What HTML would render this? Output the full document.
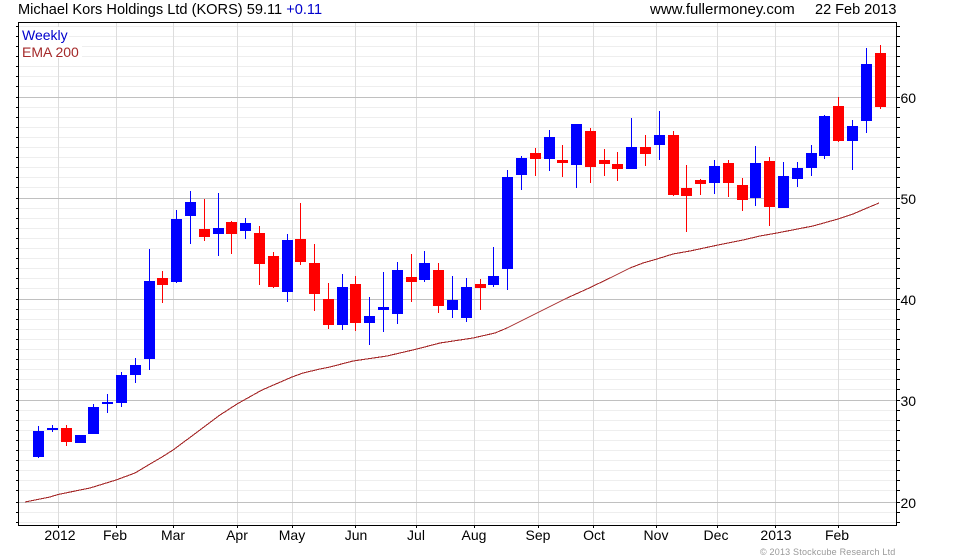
<!DOCTYPE html>
<html><head><meta charset="utf-8"><style>
html,body{margin:0;padding:0;background:#fff}
svg{display:block}
text{font-family:"Liberation Sans",Arial,sans-serif;font-size:14px;fill:#000}
.m{text-anchor:middle}
</style></head><body>
<svg width="980" height="560" viewBox="0 0 980 560" xmlns="http://www.w3.org/2000/svg">
<rect width="980" height="560" fill="#fff"/>
<g shape-rendering="crispEdges">
<path fill="#eeeeee" d="M19 26h878v1H19zM19 36h878v1H19zM19 46h878v1H19zM19 56h878v1H19zM19 66h878v1H19zM19 76h878v1H19zM19 86h878v1H19zM19 107h878v1H19zM19 117h878v1H19zM19 127h878v1H19zM19 137h878v1H19zM19 147h878v1H19zM19 157h878v1H19zM19 167h878v1H19zM19 177h878v1H19zM19 187h878v1H19zM19 208h878v1H19zM19 218h878v1H19zM19 228h878v1H19zM19 238h878v1H19zM19 248h878v1H19zM19 258h878v1H19zM19 268h878v1H19zM19 278h878v1H19zM19 288h878v1H19zM19 309h878v1H19zM19 319h878v1H19zM19 329h878v1H19zM19 339h878v1H19zM19 349h878v1H19zM19 359h878v1H19zM19 369h878v1H19zM19 379h878v1H19zM19 389h878v1H19zM19 410h878v1H19zM19 420h878v1H19zM19 430h878v1H19zM19 440h878v1H19zM19 450h878v1H19zM19 460h878v1H19zM19 470h878v1H19zM19 480h878v1H19zM19 490h878v1H19zM19 512h878v1H19zM19 522h878v1H19z"/>
<path fill="#dddddd" d="M58 23h1v502h-1zM116 23h1v502h-1zM173 23h1v502h-1zM237 23h1v502h-1zM292 23h1v502h-1zM355 23h1v502h-1zM416 23h1v502h-1zM474 23h1v502h-1zM538 23h1v502h-1zM593 23h1v502h-1zM656 23h1v502h-1zM717 23h1v502h-1zM775 23h1v502h-1zM838 23h1v502h-1z"/>
<path fill="#c0c0c0" d="M19 97h878v1H19zM19 198h878v1H19zM19 299h878v1H19zM19 400h878v1H19zM19 502h878v1H19z"/>
<rect x="19" y="27" width="50" height="16" fill="#fff"/>
<rect x="19" y="43" width="63" height="15" fill="#fff"/>
<path fill="#000" d="M18 22h879v1H18zM18 22h1v504h-1zM18 525h879v1H18zM896 22h1v504h-1z"/>
<path fill="#000" d="M16 26h2v1h-2zM16 36h2v1h-2zM16 46h2v1h-2zM16 56h2v1h-2zM16 66h2v1h-2zM16 76h2v1h-2zM16 86h2v1h-2zM16 97h2v1h-2zM16 107h2v1h-2zM16 117h2v1h-2zM16 127h2v1h-2zM16 137h2v1h-2zM16 147h2v1h-2zM16 157h2v1h-2zM16 167h2v1h-2zM16 177h2v1h-2zM16 187h2v1h-2zM16 198h2v1h-2zM16 208h2v1h-2zM16 218h2v1h-2zM16 228h2v1h-2zM16 238h2v1h-2zM16 248h2v1h-2zM16 258h2v1h-2zM16 268h2v1h-2zM16 278h2v1h-2zM16 288h2v1h-2zM16 299h2v1h-2zM16 309h2v1h-2zM16 319h2v1h-2zM16 329h2v1h-2zM16 339h2v1h-2zM16 349h2v1h-2zM16 359h2v1h-2zM16 369h2v1h-2zM16 379h2v1h-2zM16 389h2v1h-2zM16 400h2v1h-2zM16 410h2v1h-2zM16 420h2v1h-2zM16 430h2v1h-2zM16 440h2v1h-2zM16 450h2v1h-2zM16 460h2v1h-2zM16 470h2v1h-2zM16 480h2v1h-2zM16 490h2v1h-2zM16 502h2v1h-2zM16 512h2v1h-2zM16 522h2v1h-2z"/>
<path fill="#000" d="M897 26h3v1h-3zM897 36h3v1h-3zM897 46h3v1h-3zM897 56h3v1h-3zM897 66h3v1h-3zM897 76h3v1h-3zM897 86h3v1h-3zM897 97h3v1h-3zM897 107h3v1h-3zM897 117h3v1h-3zM897 127h3v1h-3zM897 137h3v1h-3zM897 147h3v1h-3zM897 157h3v1h-3zM897 167h3v1h-3zM897 177h3v1h-3zM897 187h3v1h-3zM897 198h3v1h-3zM897 208h3v1h-3zM897 218h3v1h-3zM897 228h3v1h-3zM897 238h3v1h-3zM897 248h3v1h-3zM897 258h3v1h-3zM897 268h3v1h-3zM897 278h3v1h-3zM897 288h3v1h-3zM897 299h3v1h-3zM897 309h3v1h-3zM897 319h3v1h-3zM897 329h3v1h-3zM897 339h3v1h-3zM897 349h3v1h-3zM897 359h3v1h-3zM897 369h3v1h-3zM897 379h3v1h-3zM897 389h3v1h-3zM897 400h3v1h-3zM897 410h3v1h-3zM897 420h3v1h-3zM897 430h3v1h-3zM897 440h3v1h-3zM897 450h3v1h-3zM897 460h3v1h-3zM897 470h3v1h-3zM897 480h3v1h-3zM897 490h3v1h-3zM897 502h3v1h-3zM897 512h3v1h-3zM897 522h3v1h-3z"/>
<path fill="#000" d="M58 526h1v2h-1zM116 526h1v2h-1zM173 526h1v2h-1zM237 526h1v2h-1zM292 526h1v2h-1zM355 526h1v2h-1zM416 526h1v2h-1zM474 526h1v2h-1zM538 526h1v2h-1zM593 526h1v2h-1zM656 526h1v2h-1zM717 526h1v2h-1zM775 526h1v2h-1zM838 526h1v2h-1z"/>
<path fill="#0000ff" d="M38 426h1v32h-1zM33 431h11v26H33zM52 425h1v7h-1zM47 428h11v2H47zM75 435h11v8H75zM93 404h1v30h-1zM88 407h11v27H88zM107 394h1v19h-1zM102 402h11v2h-11zM121 372h1v35h-1zM116 375h11v28h-11zM135 358h1v25h-1zM130 365h11v10h-11zM149 249h1v121h-1zM144 281h11v78h-11zM176 210h1v73h-1zM171 219h11v63h-11zM190 191h1v53h-1zM185 202h11v14h-11zM218 193h1v63h-1zM213 228h11v6h-11zM245 218h1v21h-1zM240 223h11v8h-11zM287 234h1v68h-1zM282 240h11v52h-11zM342 274h1v56h-1zM337 287h11v38h-11zM369 297h1v48h-1zM364 316h11v7h-11zM383 272h1v60h-1zM378 307h11v3h-11zM397 262h1v62h-1zM392 270h11v44h-11zM424 251h1v31h-1zM419 263h11v17h-11zM452 276h1v42h-1zM447 300h11v10h-11zM466 278h1v44h-1zM461 287h11v31h-11zM493 247h1v40h-1zM488 276h11v9h-11zM507 170h1v120h-1zM502 177h11v92h-11zM521 156h1v34h-1zM516 158h11v17h-11zM549 130h1v41h-1zM544 137h11v22h-11zM576 124h1v64h-1zM571 124h11v41h-11zM631 118h1v51h-1zM626 147h11v22h-11zM659 111h1v49h-1zM654 135h11v10h-11zM714 160h1v34h-1zM709 166h11v17h-11zM755 146h1v60h-1zM750 163h11v35h-11zM783 162h1v46h-1zM778 176h11v32h-11zM797 162h1v25h-1zM792 168h11v11h-11zM811 145h1v31h-1zM806 153h11v15h-11zM824 115h1v44h-1zM819 116h11v40h-11zM852 120h1v50h-1zM847 126h11v15h-11zM866 48h1v85h-1zM861 64h11v57h-11z"/>
<path fill="#ff0000" d="M66 425h1v21h-1zM61 428h11v14H61zM162 271h1v32h-1zM157 278h11v7h-11zM204 199h1v42h-1zM199 229h11v8h-11zM231 221h1v33h-1zM226 222h11v12h-11zM259 226h1v59h-1zM254 233h11v31h-11zM273 252h1v36h-1zM268 256h11v31h-11zM300 203h1v62h-1zM295 239h11v23h-11zM314 244h1v67h-1zM309 263h11v31h-11zM328 283h1v46h-1zM323 299h11v26h-11zM355 276h1v55h-1zM350 284h11v39h-11zM411 254h1v48h-1zM406 277h11v5h-11zM438 263h1v50h-1zM433 270h11v36h-11zM480 279h1v31h-1zM475 284h11v4h-11zM535 148h1v28h-1zM530 153h11v6h-11zM562 145h1v32h-1zM557 160h11v3h-11zM590 128h1v55h-1zM585 131h11v36h-11zM604 149h1v27h-1zM599 160h11v4h-11zM617 152h1v29h-1zM612 164h11v5h-11zM645 135h1v31h-1zM640 147h11v7h-11zM673 131h1v65h-1zM668 135h11v60h-11zM686 165h1v67h-1zM681 188h11v8h-11zM700 179h1v16h-1zM695 180h11v4h-11zM728 160h1v37h-1zM723 163h11v20h-11zM742 178h1v33h-1zM737 185h11v15h-11zM769 157h1v69h-1zM764 161h11v46h-11zM838 97h1v45h-1zM833 106h11v35h-11zM880 45h1v64h-1zM875 53h11v54h-11z"/>
<polyline fill="none" stroke="#a52a2a" stroke-width="1.1" points="25,502 50,497 58,494.5 90,488 116,480 135,473 150,464 162,457 173,450 200,430 220,415 237,404 262,390 292,377 303,373 320,369 330,367 353,361 387,356 417,349 440,343 473,338 495,333 507,328 523,320 535,314 547,308 567,298 587,289 610,278 630,268 643,263 657,259 673,254 690,251 718,245 743,240 760,236 777,233 813,226 838,219 853,214 867,208 879,203"/>
</g>
<text x="18" y="14" style="font-size:14.6px">Michael Kors Holdings Ltd (KORS) 59.11 <tspan fill="#0000cc">+0.11</tspan></text>
<text x="650" y="14" style="font-size:15px">www.fullermoney.com</text>
<text x="815" y="14" style="font-size:14.5px">22 Feb 2013</text>
<text x="22" y="40" style="fill:#0000cc">Weekly</text>
<text x="22" y="57" style="fill:#a52a2a">EMA 200</text>
<text x="900.5" y="103">60</text>
<text x="900.5" y="204">50</text>
<text x="900.5" y="305">40</text>
<text x="900.5" y="406">30</text>
<text x="900.5" y="508">20</text>
<text class="m" x="60" y="540">2012</text>
<text class="m" x="115" y="540">Feb</text>
<text class="m" x="173" y="540">Mar</text>
<text class="m" x="237" y="540">Apr</text>
<text class="m" x="292" y="540">May</text>
<text class="m" x="356" y="540">Jun</text>
<text class="m" x="416" y="540">Jul</text>
<text class="m" x="474" y="540">Aug</text>
<text class="m" x="538" y="540">Sep</text>
<text class="m" x="594" y="540">Oct</text>
<text class="m" x="656" y="540">Nov</text>
<text class="m" x="716" y="540">Dec</text>
<text class="m" x="776" y="540">2013</text>
<text class="m" x="837" y="540">Feb</text>
<text x="760" y="555" style="font-size:9px;fill:#999;letter-spacing:.2px">© 2013 Stockcube Research Ltd</text>
</svg>
</body></html>
